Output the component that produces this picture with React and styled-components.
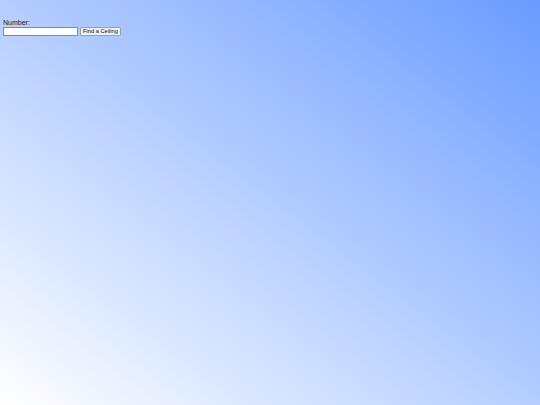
import styled, { createGlobalStyle } from "styled-components";

const GlobalStyle = createGlobalStyle`
  html, body {
    margin: 0;
    padding: 0;
    height: 100%;
  }
  body {
    font-family: "Liberation Sans", Arial, sans-serif;
    background: linear-gradient(to top right, #ffffff 0%, #6a9bff 100%);
    background-attachment: fixed;
    min-height: 405px;
  }
`;

const Page = styled.div`
  padding: 18px 3px 0;
`;

const Label = styled.div`
  font-size: 7px;
  line-height: 9px;
  font-weight: 400;
  color: #222;
`;

const Row = styled.form`
  display: flex;
  align-items: center;
  gap: 2px;
  margin: 0;
`;

const NumberInput = styled.input`
  box-sizing: border-box;
  width: 75px;
  height: 9px;
  padding: 0;
  margin: 0;
  border: 1px solid #8a8a8a;
  background: #fff;
  font-size: 7px;
`;

const Button = styled.button`
  box-sizing: border-box;
  width: 41px;
  height: 9px;
  padding: 0;
  margin: 0;
  border: 1px solid #a0a0a0;
  border-radius: 1px;
  background: #efefef;
  font-family: "Liberation Sans", Arial, sans-serif;
  font-size: 5.7px;
  line-height: 7px;
  color: #111;
  text-align: center;
  white-space: nowrap;
`;

export default function App() {
  return (
    <>
      <GlobalStyle />
      <Page>
        <Label>Number:</Label>
        <Row onSubmit={(e) => e.preventDefault()}>
          <NumberInput type="text" aria-label="Number" />
          <Button type="submit">Find a Ceiling</Button>
        </Row>
      </Page>
    </>
  );
}
